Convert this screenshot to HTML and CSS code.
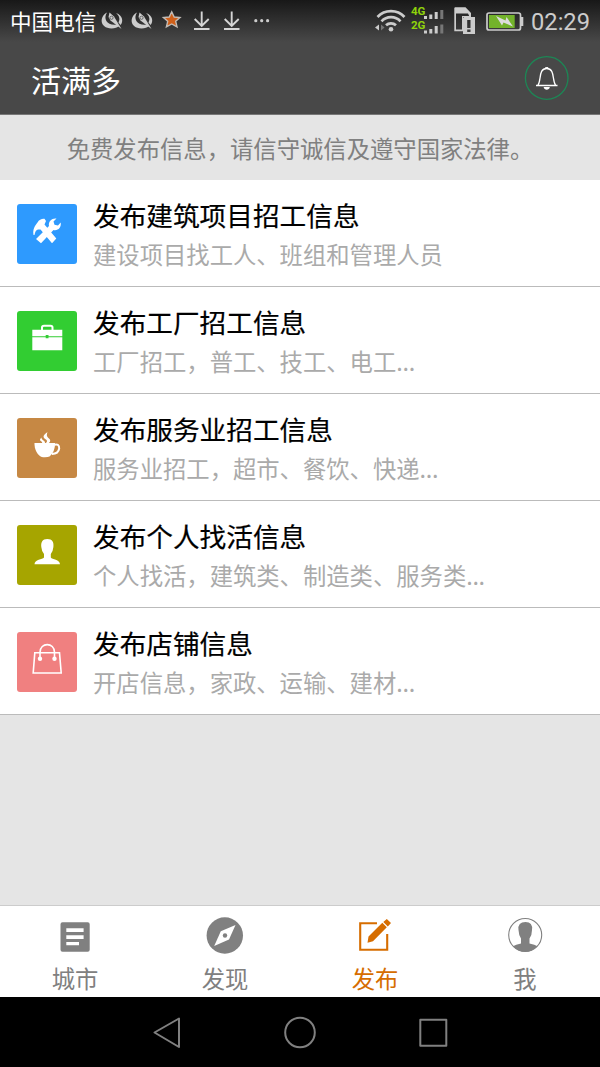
FILE: index.html
```html
<!DOCTYPE html>
<html lang="zh-CN">
<head>
<meta charset="utf-8">
<title>活满多</title>
<link rel="stylesheet" href="styles.css">
</head>
<body>
<div class="screen">
  <div class="top">
    <div class="status">
      <span class="carrier">中国电信</span>
      <svg class="notif-icons" width="180" height="40" viewBox="97 0 180 40">
        <defs>
          <g id="sat">
            <path d="M107 12.600C99.500 16 99 28.300 111.500 28.500C115 28.500 117.500 27.500 119 26L117.500 24.500C108 26.500 102.500 19.500 107 12.600Z" fill="#ccc"/>
            <path d="M116 13C123 15.500 123.500 22 120.500 25L118.500 22.500C120.500 18.500 119 15.500 116 13Z" fill="#ccc"/>
            <path d="M109.500 12.500L114 16.500L121.500 29L110.500 20.500L108.500 17Z" fill="#ccc"/>
            <circle cx="111.500" cy="17.800" r="1.600" fill="#ccc" stroke="#444" stroke-width=".7"/>
          </g>
          <g id="down" fill="none" stroke="#d5d5d5" stroke-width="1.900">
            <path d="M201.700 11.500V26M194.700 19L201.700 26L208.700 19M194 29H209.500"/>
          </g>
        </defs>
        <use href="#sat"/><use href="#sat" x="30"/>
        <path d="M171.700 11.800L174.200 17L180 17.500L175.700 21.300L177 26.800L171.700 24L166.400 26.800L167.700 21.300L163.400 17.500L169.200 17Z" fill="#d0601a" stroke="#c4bcb5" stroke-width="1.400"/>
        <use href="#down"/><use href="#down" x="30"/>
        <g fill="#ccc"><circle cx="255.800" cy="20.700" r="1.600"/><circle cx="261.700" cy="20.700" r="1.600"/><circle cx="267.600" cy="20.700" r="1.600"/></g>
      </svg>
      <svg class="system-icons" width="153" height="40" viewBox="373 0 153 40">
        <g fill="none" stroke="#ccc" stroke-width="2.700">
          <path d="M377.500 17A18.500 18.500 0 0 1 404.500 17M381.500 21.300A13 13 0 0 1 400.500 21.300M386 25.300A7.300 7.300 0 0 1 396 25.300"/>
        </g>
        <circle cx="391" cy="29.200" r="2.300" fill="#ccc"/>
        <path d="M375 27.500L379 24.500V30.500Z" fill="#ccc"/><path d="M384.500 27.500L381 24.500V30.500Z" fill="#777"/>
        <g class="network" fill="#8fd30b"><text x="411" y="14.500">4G</text><text x="411" y="29">2G</text></g>
        <g fill="#ccc">
          <path d="M424 16h3v3h-3zM429.300 14.500h3V19h-3zM434.700 12h3v7h-3zM424 30.500h3v3h-3zM429.300 29h3v4.500h-3zM434.700 26h3v7.500h-3z"/>
          <path d="M440.300 10h3v9h-3zM440.300 24.500h3v9h-3z" fill="#777"/>
          <path fill-rule="evenodd" d="M455 7.200H465.500L471 13V17H463V31.300H454.300V8ZM456 13.500V29.500H462V16H469V15.500L468 13.500Z"/>
          <path fill-rule="evenodd" d="M464 17H475V34H463V18ZM467.200 20V28H470.500V20ZM467.200 29.500V32H470.500V29.500Z"/>
        </g>
        <rect x="487" y="13" width="33.500" height="17" rx="2" fill="none" stroke="#ccc" stroke-width="1.700"/>
        <rect x="489" y="15" width="25.700" height="13" fill="#73b32b"/>
        <path d="M521 17H523.300V26H521Z" fill="#ccc"/>
        <path d="M496 16L505.500 20.500L506.500 17L513 26.500L503.500 22.500L502 25.500Z" fill="#ddd"/>
      </svg>
      <span class="clock">02:29</span>
    </div>
    <header class="header">
      <h1 class="brand">活满多</h1>
      <svg class="bell" width="46" height="46" viewBox="524 55 46 46" fill="none">
        <circle cx="546.700" cy="78" r="21.300" stroke="#1d8655" stroke-width="1.300"/>
        <path d="M536 85.500H557.500M538 85C541.500 80 538.300 68.500 546.700 68.500C555 68.500 552 80 555.500 85" stroke="#fff" stroke-width="1.300"/>
        <path d="M545.500 68.300V67.600H548V68.300" stroke="#fff"/>
        <path d="M543.600 87H549.800C549.300 90.700 544.200 90.700 543.600 87Z" fill="#fff"/>
      </svg>
    </header>
  </div>
  <p class="notice">免费发布信息，请信守诚信及遵守国家法律<span class="stop">。</span></p>
  <main class="list">
    <section class="row">
      <svg class="tile blue" viewBox="0 0 60 60"><path d="M16.500 31C15.500 25 18 21.500 20.500 18.500C22 15.500 25 14.500 27.500 14.800L29 17L27.500 20.500L39.300 34.500L35 39.200L23.500 25.500C19.500 25 18.500 26.500 17.500 31Z" fill="#fff"/><path d="M39.500 14.500L36.500 17.500L37.500 20.800L41 21.500L43.700 18.500C44.600 23.500 41 27 36.500 26L24 39.300L19 35L32 22C31 17.500 35 13.800 39.500 14.500Z" fill="#fff"/></svg>
      <div class="copy"><h2 class="title">发布建筑项目招工信息</h2><p class="detail">建设项目找工人、班组和管理人员</p></div>
    </section>
    <section class="row">
      <svg class="tile green" viewBox="0 0 60 60"><path d="M15.300 18.800H45.300V25.300H31.500V24H28.700V25.300H15.300ZM15.300 26.300H28.700V27.300H31.500V26.300H45.300V39.300H15.300Z" fill="#fff"/><path d="M25 19V16.500Q25 14.800 27 14.800H33.500Q35.500 14.800 35.500 16.500V19" fill="none" stroke="#fff" stroke-width="2"/></svg>
      <div class="copy"><h2 class="title">发布工厂招工信息</h2><p class="detail">工厂招工，普工、技工、电工<span class="dots">...</span></p></div>
    </section>
    <section class="row">
      <svg class="tile brown" viewBox="0 0 60 60"><path d="M17.500 25H38C38.200 31 36 35.500 32.500 38.500Q31 39.300 28 39.300H26C20.500 38.500 17.200 31 17.500 25Z" fill="#fff"/><path d="M37.500 26.800Q42.300 25.500 42.200 30.500Q41.300 35.800 35 36" fill="none" stroke="#fff" stroke-width="2"/><path d="M30.500 14C24.500 18 26.500 20 29 21.500Q31 23 29 25H32Q34.500 22.500 32 20.500C29.500 18.500 29.500 17 30.500 14ZM24.500 19.500Q21.500 22 24.500 23.500L25.500 25.300H28Q28.500 23.500 26.500 22.500Q24 21 24.500 19.500Z" fill="#fff"/></svg>
      <div class="copy"><h2 class="title">发布服务业招工信息</h2><p class="detail">服务业招工，超市、餐饮、快递<span class="dots">...</span></p></div>
    </section>
    <section class="row">
      <svg class="tile olive" viewBox="0 0 60 60"><path d="M30.300 14C35.500 14 37 17.300 36.400 22Q36 26.500 33.800 29V32.500C35 34.500 43 34.500 43 39.200H17.500C17.500 34.500 25.500 34.500 27 32.500V29Q24.700 26.500 24.300 22C23.800 17.300 25.300 14 30.300 14Z" fill="#fff"/></svg>
      <div class="copy"><h2 class="title">发布个人找活信息</h2><p class="detail">个人找活，建筑类、制造类、服务类<span class="dots">...</span></p></div>
    </section>
    <section class="row">
      <svg class="tile pink" viewBox="0 0 60 60"><path d="M17.800 20.800H42.500L44.200 41H16.200Z" fill="none" stroke="#fff" stroke-width="1.600"/><path d="M23 26V20.300C23 10 37.500 10 37.500 20.300V26" fill="none" stroke="#fff" stroke-width="1.600"/><circle cx="23" cy="26.800" r="2.200" fill="#fff"/><circle cx="37.500" cy="26.800" r="2.200" fill="#fff"/></svg>
      <div class="copy"><h2 class="title">发布店铺信息</h2><p class="detail">开店信息，家政、运输、建材<span class="dots">...</span></p></div>
    </section>
  </main>
  <nav class="tabs">
    <a class="tab">
      <svg class="tab-icon" viewBox="55 915 40 40"><path fill-rule="evenodd" fill="#808080" d="M62.500 922.300H87.700Q89.700 922.300 89.700 924.300V949.700Q89.700 951.700 87.700 951.700H62.500Q60.500 951.700 60.500 949.700V924.300Q60.500 922.300 62.500 922.300ZM66.300 928.300V932H83.600V928.300ZM66.300 935.200V939H83.600V935.200ZM66.300 942V945.300H79V942Z"/></svg>
      <span>城市</span>
    </a>
    <a class="tab">
      <svg class="tab-icon" viewBox="205 915 40 40"><circle cx="224.800" cy="935.500" r="18.200" fill="#808080"/><path d="M235.500 925L229 939.500L214.200 946L220.800 931.300Z" fill="#fff"/><circle cx="225" cy="935.500" r="2.200" fill="#808080"/></svg>
      <span>发现</span>
    </a>
    <a class="tab active">
      <svg class="tab-icon" viewBox="355 915 40 40"><path d="M377 923.200H360.200V949.800H387.200V934" fill="none" stroke="#d66d00" stroke-width="2.100"/><path d="M367.500 942.800L368.500 936.500L382.300 922.800L386.800 927.300L373 941.200ZM383.300 922L386.800 918.900L391 923.100L387.800 926.500Z" fill="#d66d00"/></svg>
      <span>发布</span>
    </a>
    <a class="tab">
      <svg class="tab-icon" viewBox="505 915 40 40"><circle cx="525.200" cy="935" r="16.500" fill="none" stroke="#808080" stroke-width="1.100"/><path d="M513 946.300Q515.500 944.500 521 943.500V938.500Q518.700 935 518.500 930Q517.500 922 525.500 922Q533 922 532 930Q532 935 529.500 938.500V943.500Q535 944.500 537.500 946.300Q532 951.800 525.200 951.800Q518.500 951.800 513 946.300Z" fill="#808080"/></svg>
      <span>我</span>
    </a>
  </nav>
  <div class="system-nav">
    <svg width="300" height="40" viewBox="150 1013 300 40" fill="none" stroke="#808080" stroke-width="2" stroke-linejoin="round">
      <path d="M154.500 1032.500L179 1018.500V1047Z"/><circle cx="300" cy="1032.500" r="14.800"/><rect x="420.300" y="1019.800" width="26" height="26"/>
    </svg>
  </div>
</div>
</body>
</html>
```
FILE: styles.css
```css
* { box-sizing: border-box; }
body { margin: 0; font-family: "Noto Sans CJK SC", sans-serif; }
.screen { display: flex; flex-direction: column; width: 600px; height: 1067px; background: #e5e5e5; overflow: hidden; }
svg { display: block; flex: none; }
.top { height: 115px; flex: none; background: linear-gradient(#181818, #484848 42px); border-bottom: 1px solid #777; }
.status { height: 40px; display: flex; align-items: center; padding-left: 10px; }
.carrier { width: 87px; font-size: 21.6px; line-height: 40px; color: #fff; padding-top: 1px; white-space: nowrap; }
.system-icons { margin-left: 96px; }
.network { font: bold 11.5px Roboto, sans-serif; }
.clock { margin-left: 5px; padding-top: 3px; font: 23.7px/36px Roboto, sans-serif; color: #ccc; }
.header { height: 74px; display: flex; align-items: center; justify-content: space-between; padding: 1px 30px 0 31px; }
.brand { margin: 3px 0 0; font-size: 30px; line-height: 40px; font-weight: 400; color: #fff; }
.notice { flex: none; height: 65px; margin: 0; text-align: center; font-size: 23.33px; line-height: 66px; color: #808080; }
.stop { margin-right: 0; }
.list { flex: none; background: #fff; }
.row { height: 107px; display: flex; align-items: flex-start; gap: 16.5px; padding: 23.5px 16.5px 0; border-bottom: 1px solid #bbb; }
.tile { width: 60px; height: 60px; border-radius: 3px; }
.blue { background: #2e9afe; }
.green { background: #32cd32; }
.brown { background: #c68844; }
.olive { background: #a6a500; }
.pink { background: #f08080; }
.copy { margin-top: -8.5px; }
.title { margin: 0; font-size: 26.67px; line-height: 40px; font-weight: 400; color: #000; -webkit-text-stroke: .2px #000; }
.detail { margin: 0; font-size: 23.33px; line-height: 38px; color: #aaa; }
.dots { letter-spacing: -.3px; }
.tabs { flex: none; margin-top: auto; height: 92px; display: flex; background: #fff; border-top: 1px solid #ccc; }
.tab { flex: 1; display: flex; flex-direction: column; align-items: center; padding-top: 9px; font-size: 23.33px; line-height: 34px; color: #808080; }
.tab span { margin-top: 6px; }
.tab-icon { width: 40px; height: 40px; }
.active { color: #d66d00; }
.system-nav { flex: none; height: 70px; background: #000; display: flex; justify-content: center; padding-top: 16px; }
```
